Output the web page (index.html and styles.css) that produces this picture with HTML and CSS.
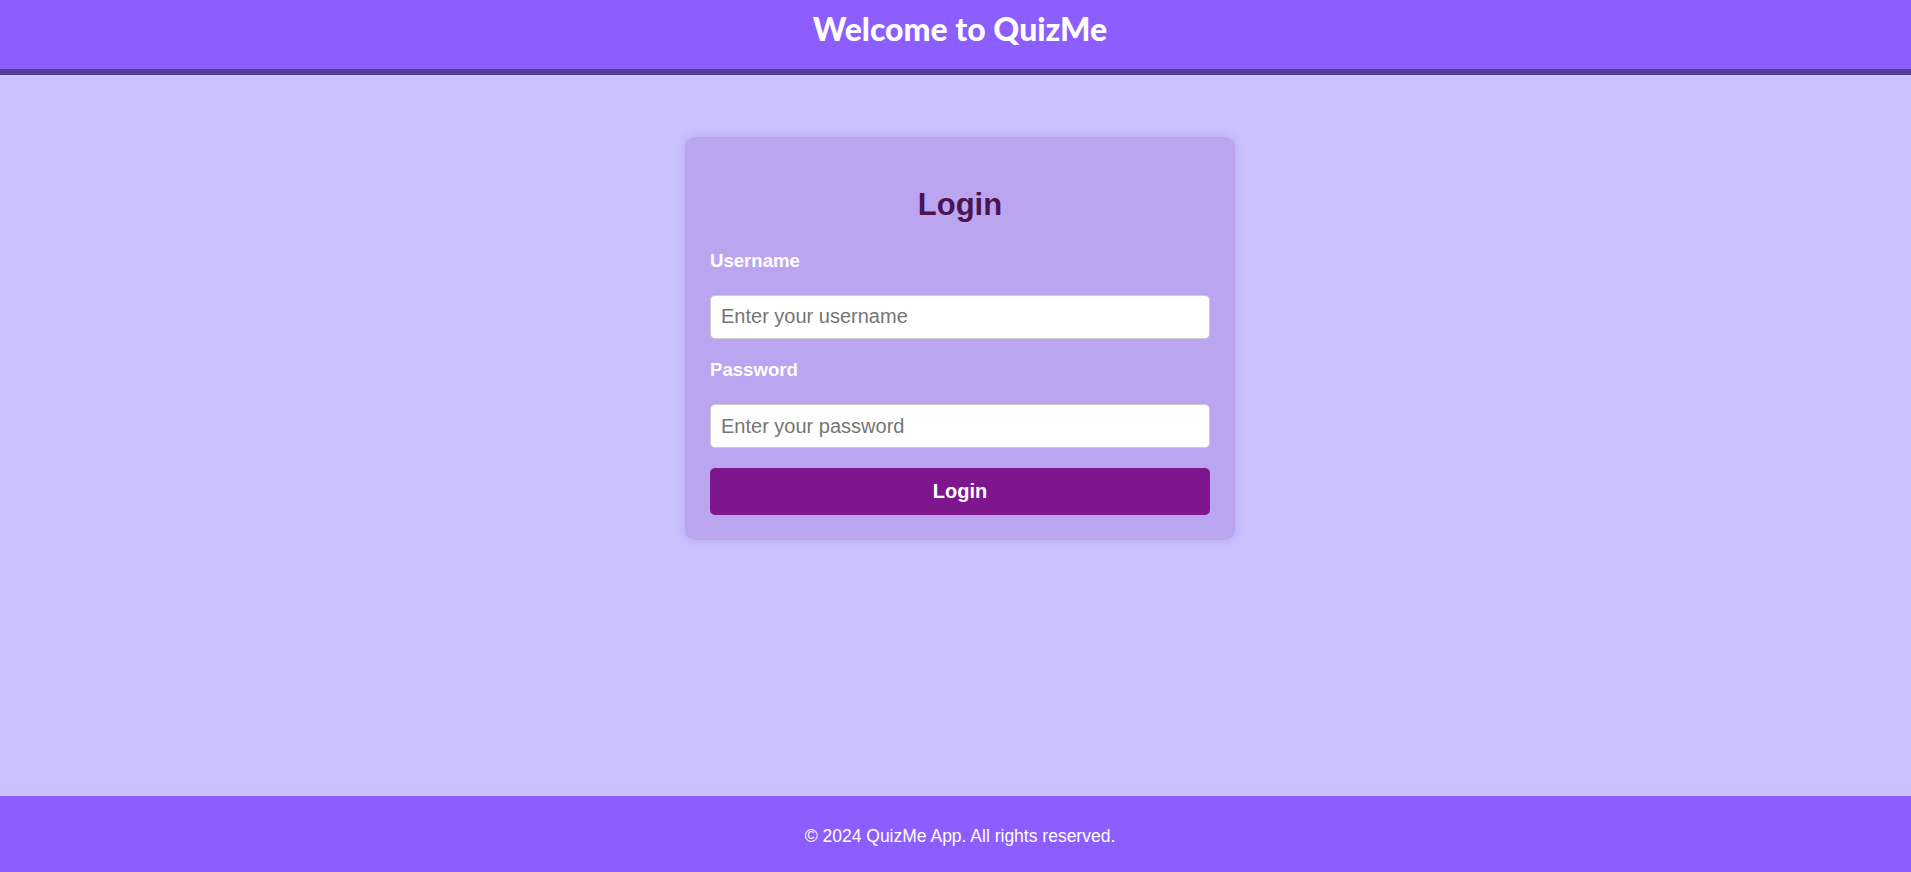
FILE: index.html
```html
<!DOCTYPE html>
<html lang="en">
<head>
<meta charset="UTF-8">
<title>QuizMe - Login</title>
<link rel="stylesheet" href="styles.css">
</head>
<body>
<header class="site-header">
  <h1 class="site-title">Welcome to QuizMe</h1>
</header>
<main class="site-main">
  <div class="login-card">
    <h2 class="login-title">Login</h2>
    <form class="login-form">
      <label class="field-label" for="username">Username</label>
      <input class="field-input" type="text" id="username" placeholder="Enter your username">
      <label class="field-label field-label-gap" for="password">Password</label>
      <input class="field-input" type="password" id="password" placeholder="Enter your password">
      <button class="login-button" type="button">Login</button>
    </form>
  </div>
</main>
<footer class="site-footer">
  <p class="footer-text">&copy; 2024 QuizMe App. All rights reserved.</p>
</footer>
</body>
</html>
```
FILE: styles.css
```css
* { box-sizing: border-box; }
html, body { margin: 0; padding: 0; }
body {
  min-height: 100vh;
  display: flex;
  flex-direction: column;
  background: #cbc1ff;
  font-family: "Liberation Sans", Arial, sans-serif;
}
.site-header {
  background: #8c5dff;
  height: 75px;
  border-bottom: 6px solid #553c9a;
  padding-left: 9px;
  display: flex;
  justify-content: center;
}
.site-title {
  margin: 0;
  padding-top: 11px;
  font-family: Lato, "Open Sans", sans-serif;
  font-weight: 900;
  font-size: 32px;
  line-height: 35px;
  color: #ffffff;
}
.site-main {
  flex: 1;
  padding: 62px 0 0 9px;
  display: flex;
  justify-content: center;
  align-items: flex-start;
}
.login-card {
  width: 550px;
  background: #bba5f1;
  border-radius: 10px;
  padding: 25px;
  box-shadow: 0 0 10px rgba(80, 50, 160, 0.18);
}
.login-title {
  margin: 26px 0 27px;
  text-align: center;
  font-size: 31px;
  line-height: 34.5px;
  font-weight: bold;
  color: #4a1452;
}
.login-form {
  display: flex;
  flex-direction: column;
}
.field-label {
  display: block;
  font-size: 18.6px;
  line-height: 21.3px;
  font-weight: bold;
  color: #ffffff;
  margin-bottom: 24px;
}
.field-label-gap { margin-top: 20px; }
.field-input {
  width: 100%;
  height: 44px;
  padding: 0 10px;
  border: 1px solid #cccccc;
  border-radius: 5px;
  background: #ffffff;
  font-family: "Liberation Sans", Arial, sans-serif;
  font-size: 20px;
  color: #333333;
}
.field-input::placeholder { color: #757575; }
.login-button {
  margin-top: 20px;
  width: 100%;
  height: 47px;
  border: none;
  border-radius: 5px;
  background: #7e178d;
  color: #ffffff;
  font-family: "Liberation Sans", Arial, sans-serif;
  font-size: 20px;
  font-weight: bold;
  cursor: pointer;
}
.site-footer {
  background: #8c5dff;
  height: 76px;
  padding: 30px 0 0 9px;
  text-align: center;
}
.footer-text {
  margin: 0;
  font-size: 17.5px;
  line-height: 20px;
  color: #ffffff;
}
```
